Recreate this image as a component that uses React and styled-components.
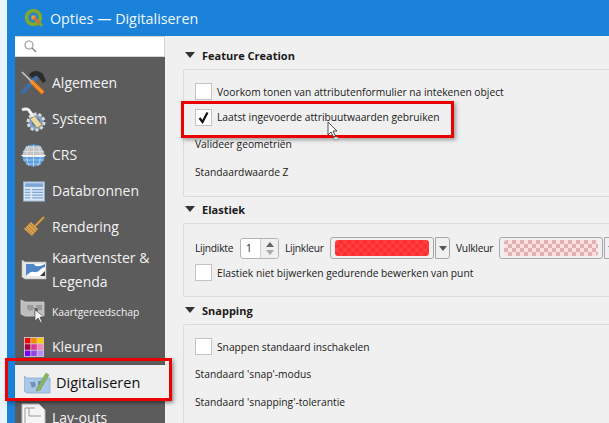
import React from 'react'
import styled, { createGlobalStyle } from 'styled-components'

const GlobalStyle = createGlobalStyle`
html, body {
  margin: 0;
  padding: 0;
  overflow: hidden;
  background: #eaf4fb;
}
`;

const Page = styled.div`
position: relative;
width: 609px;
height: 423px;
overflow: hidden;
padding-left: 7px;
box-sizing: border-box;
font-family: "Open Sans", "Noto Sans", sans-serif;
`;

const Window = styled.div`
display: flex;
flex-direction: column;
height: 100%;
background: #1a82d8;
padding-left: 8px;
`;

const TitleBar = styled.div`
display: flex;
align-items: center;
gap: 6px;
height: 36px;
flex: none;
padding-left: 9px;
color: #eef7ff;
font-size: 14.3px;
`;

const Body = styled.div`
display: flex;
flex: 1;
min-height: 0;
background: #f0f0f0;
`;

const Sidebar = styled.div`
display: flex;
flex-direction: column;
width: 150px;
flex: none;
background: #5c5c5c;
`;

const SearchBox = styled.div`
display: flex;
align-items: center;
flex: none;
height: 21px;
padding-left: 9px;
margin-bottom: 8px;
background: #fff;
border: 1px solid #d5d5d5;
border-width: 1px 1px 1px 0;
box-sizing: border-box;
`;

const NavItem = styled.div`
position: relative;
display: flex;
align-items: center;
flex: none;
height: ${({ $h }) => $h}px;
color: ${({ $active }) => ($active ? '#111' : '#f2f2f2')};
font-size: ${({ $small, $active }) => ($small ? 10.3 : $active ? 14.5 : 14)}px;
line-height: 24px;
background: ${({ $active }) => ($active ? '#efefef' : 'transparent')};
margin-right: ${({ $active }) => ($active ? '-5px' : '0')};
box-shadow: ${({ $active }) => ($active ? '1px 1px 3px rgba(0,0,0,0.3)' : 'none')};
`;

const NavIcon = styled.div`
display: flex;
align-items: center;
justify-content: center;
width: 37px;
flex: none;
padding-left: ${({ $active }) => ($active ? '4px' : '0')};
`;

const NavLabel = styled.div`
width: ${({ $wrap }) => ($wrap ? '105px' : 'auto')};
white-space: ${({ $wrap }) => ($wrap ? 'normal' : 'nowrap')};
`;

const Content = styled.div`
flex: 1;
min-width: 0;
padding: 12px 0 0 18px;
display: flex;
flex-direction: column;
overflow: hidden;
`;

const SectionHead = styled.div`
display: flex;
align-items: center;
flex: none;
gap: 7px;
height: 16px;
box-sizing: border-box;
padding: 0 0 2px 2px;
margin-bottom: 5px;
font-size: 11px;
font-weight: 700;
color: #1a1a1a;
`;

const Triangle = styled.div`
width: 0;
height: 0;
border-left: 5px solid transparent;
border-right: 5px solid transparent;
border-top: 6px solid #333;
`;

const Group = styled.div`
display: flex;
flex-direction: column;
height: ${({ $h }) => $h}px;
flex: none;
margin-bottom: ${({ $mb }) => $mb}px;
margin-right: -20px;
padding: ${({ $pt }) => $pt}px 0 0 11px;
box-sizing: border-box;
border: 1px solid #dcdcdc;
border-radius: 2px;
`;

const Row = styled.div`
display: flex;
align-items: center;
gap: 5px;
height: ${({ $h }) => $h}px;
flex: none;
font-size: 10.25px;
color: #1a1a1a;
white-space: nowrap;
`;

const FieldLabel = styled.span`
width: ${({ $w }) => $w}px;
flex: none;
letter-spacing: -0.25px;
`;

const Check = styled.div`
display: flex;
align-items: center;
justify-content: center;
width: 17px;
height: 17px;
flex: none;
background: #fff;
border: 1px solid #c4c4c4;
box-sizing: border-box;
`;

const Spin = styled.div`
display: flex;
align-items: center;
justify-content: space-between;
width: 39px;
height: 21px;
flex: none;
margin: 0 1px 0 2px;
padding-left: 5px;
box-sizing: border-box;
background: #fff;
border: 1px solid #b4b4b4;
border-radius: 3px;
overflow: hidden;
`;

const SpinArrows = styled.div`
display: flex;
flex-direction: column;
align-items: center;
justify-content: center;
gap: 3px;
width: 17px;
height: 100%;
background: #f0f0f0;
border-left: 1px solid #cfcfcf;
`;

const Arrow = styled.div`
width: 0;
height: 0;
border-left: 4px solid transparent;
border-right: 4px solid transparent;
border-bottom: ${({ $down, $c }) => ($down ? 'none' : `5px solid ${$c}`)};
border-top: ${({ $down, $c }) => ($down ? `5px solid ${$c}` : 'none')};
`;

const ColorButton = styled.div`
width: 104px;
height: 22px;
flex: none;
margin-left: 2px;
padding: 2px 4px;
box-sizing: border-box;
background: #f0f0f0;
border: 1px solid #a8a8a8;
border-radius: 3px;
`;

const Swatch = styled.div`
height: 100%;
border-radius: 3px;
background: repeating-conic-gradient(${({ $a }) => $a} 0 25%, ${({ $b }) => $b} 0 50%) 0 0 / 8px 8px;
`;

const DropButton = styled.div`
display: flex;
align-items: center;
justify-content: center;
width: 15px;
height: 22px;
flex: none;
margin: 0 1px 0 -4px;
box-sizing: border-box;
background: #f0f0f0;
border: 1px solid #a8a8a8;
border-radius: 0 3px 3px 0;
`;

const Highlight = styled.div`
position: absolute;
left: ${({ $x }) => $x}px;
top: ${({ $y }) => $y}px;
width: ${({ $w }) => $w}px;
height: ${({ $h }) => $h}px;
box-sizing: border-box;
border: 3px solid #ea0000;
box-shadow: 2px 2px 4px rgba(0,0,0,0.35);
pointer-events: none;
`;

const CursorMark = styled.svg`
position: absolute;
left: 327px;
top: 121px;
`;

const Logo = () => (
  <svg width="20" height="20" viewBox="0 0 19 19">
    <circle cx="9" cy="9" r="6.5" fill="none" stroke="#7fa82e" strokeWidth="3.6" />
    <path d="M10 10l7 7" stroke="#7fa82e" strokeWidth="3" />
    <path d="M7 7h4v4H7z" fill="#f09a2a" />
    <path d="M9.5 9.5l5 5" stroke="#e2604a" strokeWidth="2" />
  </svg>
);

const SearchIcon = () => (
  <svg width="13" height="13" viewBox="0 0 13 13">
    <circle cx="5" cy="5" r="4" fill="none" stroke="#9a9a9a" strokeWidth="1.2" />
    <path d="M8 8l4 4" stroke="#8a8a8a" strokeWidth="1.6" />
  </svg>
);

const ToolsIcon = () => (
  <svg width="27" height="27" viewBox="0 0 27 27">
    <path d="M9 5c3-5 10-5 14-1l3 7-3 2-4-5c-2-2-5-1-7 0z" fill="#2b2b2b" />
    <path d="M16 8L3 22" stroke="#3d6ea8" strokeWidth="4.4" strokeLinecap="round" />
    <path d="M2 2l10 10" stroke="#c8c8c8" strokeWidth="1.6" />
    <path d="M11 11l12 12" stroke="#f07d12" strokeWidth="4" />
    <path d="M11 11l12 12" stroke="#ffb060" strokeWidth="1" />
  </svg>
);

const SystemIcon = () => (
  <svg width="27" height="27" viewBox="0 0 27 27">
    <circle cx="16" cy="16" r="8" fill="#7f9fc6" stroke="#d8d8d8" strokeWidth="3" strokeDasharray="3 2" />
    <circle cx="16" cy="16" r="4" fill="#4d76ab" />
    <path d="M2 4c4-2 7-1 8 2l10 13" stroke="#f2f2f2" strokeWidth="3" fill="none" />
    <path d="M10 13l7 9 5-3-7-9z" fill="#e9d9a0" stroke="#7a6a3a" strokeWidth="0.6" />
  </svg>
);

const GlobeIcon = () => (
  <svg width="27" height="27" viewBox="0 0 27 27">
    <circle cx="13.5" cy="13.5" r="11" fill="#5aa0de" />
    <path d="M6 4.500h15l4 9H2z" fill="#c4c4c4" />
    <path d="M0.500 13h26l-3 2H3.500z" fill="#f2f2f2" />
    <path d="M3 9.500h21M6 5h15M3 18h21M6 22h15M13.500 3v22M9 3c-3 7-3 15 0 21M18 3c3 7 3 15 0 21" stroke="#e6eef5" strokeWidth="0.7" fill="none" opacity="0.8" />
  </svg>
);

const TableIcon = () => (
  <svg width="22" height="21" viewBox="0 0 24 22">
    <rect x="0.5" y="0.5" width="23" height="21" fill="#d9e6f5" stroke="#8fa9c8" />
    <rect x="2" y="2" width="20" height="4" fill="#7ea6d6" />
    <path d="M2 9h6M10 9h12M2 12h6M10 12h12M2 15h6M10 15h12M2 18h6M10 18h12" stroke="#7ea6d6" strokeWidth="1.4" />
  </svg>
);

const BrushIcon = () => (
  <svg width="24" height="24" viewBox="0 0 24 24">
    <path d="M13 11l9-9" stroke="#d99a3a" strokeWidth="2.2" />
    <path d="M9 7l7 7-6 7-8-7z" fill="#d9a050" />
    <path d="M6 11l7 7M4 13l7 7M8 9l7 7" stroke="#a8742c" strokeWidth="0.8" />
  </svg>
);

const MapIcon = () => (
  <svg width="26" height="20" viewBox="0 0 26 20">
    <path d="M1 0l3 2h21v17H4l-3-2z" fill="#e6e6e6" stroke="#bdbdbd" strokeWidth="0.6" />
    <rect x="5" y="4" width="19" height="12" fill="#fff" />
    <path d="M5 4h8c1 3 5 3 11 0v3c-5 1-6 6-11 5-3-1-5 1-8 4z" fill="#4f86c6" />
    <path d="M19 16l5-5v5z" fill="#3a3a3a" />
  </svg>
);

const ToolMapIcon = () => (
  <svg width="28" height="26" viewBox="0 0 28 26">
    <path d="M1 1l4 2h19v14H5l-4-2z" fill="#bdbdbd" stroke="#d2d2d2" strokeWidth="0.8" />
    <path d="M7 6h6l1 4-4 2-3-2zM16 6h6v5h-5zM14 12l3 1v3h-3z" fill="#9a9a9a" />
    <path d="M14 9h3l1 3-2 1z" fill="#5c5c5c" />
    <path d="M15 11v11l3-3 3 5 1-1-2-5h4z" fill="#f5f5f5" stroke="#333" strokeWidth="0.5" />
  </svg>
);

const ColorsIcon = () => {
  const colors = ['#ff0000', '#f58a00', '#ffc800', '#a80038', '#e0349c', '#ff7fb8', '#7a00ff', '#9444e8', '#b88cff'];
  return (
    <svg width="20" height="20" viewBox="0 0 22 22">
      <rect width="22" height="22" fill="#c8c8c8" />
      {colors.map((c, i) => (
        <rect key={c} x={1 + (i % 3) * 7} y={1 + Math.floor(i / 3) * 7} width="6" height="6" fill={c} />
      ))}
    </svg>
  );
};

const DigitizeIcon = () => (
  <svg width="27" height="24" viewBox="0 0 27 24">
    <path d="M0 5l3 2h23v15H3l-3-2z" fill="#a9c7e6" stroke="#7fa6cf" strokeWidth="0.7" />
    <path d="M6 11h5l1 4-4 2zM14 10h5l-2 4h-3zM13 16h4v3h-3z" fill="#6f93ba" />
    <path d="M13 17l9-15 3 2-9 15-4 1z" fill="#8db563" stroke="#6c9146" strokeWidth="0.5" />
  </svg>
);

const DocIcon = () => (
  <svg width="25" height="30" viewBox="0 0 25 30">
    <path d="M1 1h17l6 6v23H1z" fill="#f5f5f5" stroke="#bbb" />
    <path d="M4 5h10M4 5v24M8 5v8h12" stroke="#999" strokeWidth="1" fill="none" />
  </svg>
);

const navItems = [
  { label: 'Algemeen', h: 36, Icon: ToolsIcon },
  { label: 'Systeem', h: 36, Icon: SystemIcon },
  { label: 'CRS', h: 36, Icon: GlobeIcon },
  { label: 'Databronnen', h: 36, Icon: TableIcon },
  { label: 'Rendering', h: 36, Icon: BrushIcon },
  { label: 'Kaartvenster & Legenda', h: 50, Icon: MapIcon, wrap: true },
  { label: 'Kaartgereedschap', h: 34, Icon: ToolMapIcon, small: true },
  { label: 'Kleuren', h: 36, Icon: ColorsIcon },
  { label: 'Digitaliseren', h: 35, Icon: DigitizeIcon, active: true },
  { label: 'Lay-outs', h: 36, Icon: DocIcon },
];

const CheckRow = ({ checked, h = 25.5, children }) => (
  <Row $h={h}>
    <Check>
      {checked && (
        <svg width="13" height="13" viewBox="0 0 13 13">
          <path d="M2.5 7l3 4 5-9.5" fill="none" stroke="#111" strokeWidth="2.2" />
        </svg>
      )}
    </Check>
    {children}
  </Row>
);

const Section = ({ title, h, pt, mb = 5, children }) => (
  <>
    <SectionHead>
      <Triangle />
      {title}
    </SectionHead>
    <Group $h={h} $pt={pt} $mb={mb}>
      {children}
    </Group>
  </>
);

export default function App() {
  return (
    <>
      <GlobalStyle />
      <Page>
        <Window>
          <TitleBar>
            <Logo />
            Opties — Digitaliseren
          </TitleBar>
          <Body>
            <Sidebar>
              <SearchBox>
                <SearchIcon />
              </SearchBox>
              {navItems.map(({ label, h, Icon, wrap, small, active }) => (
                <NavItem key={label} $h={h} $small={small} $active={active}>
                  <NavIcon $active={active}>
                    <Icon />
                  </NavIcon>
                  <NavLabel $wrap={wrap}>{label}</NavLabel>
                </NavItem>
              ))}
            </Sidebar>
            <Content>
              <Section title="Feature Creation" h={128} pt={9}>
                <CheckRow>Voorkom tonen van attributenformulier na intekenen object</CheckRow>
                <CheckRow checked>Laatst ingevoerde attribuutwaarden gebruiken</CheckRow>
                <Row $h={28}>Valideer geometriën</Row>
                <Row $h={28}>Standaardwaarde Z</Row>
              </Section>
              <Section title="Elastiek" h={74} pt={12} mb={6}>
                <Row $h={24}>
                  <FieldLabel $w={38}>Lijndikte</FieldLabel>
                  <Spin>
                    1
                    <SpinArrows>
                      <Arrow $c="#666" />
                      <Arrow $down $c="#aaa" />
                    </SpinArrows>
                  </Spin>
                  <FieldLabel $w={38}>Lijnkleur</FieldLabel>
                  <ColorButton>
                    <Swatch $a="#ff2e2e" $b="#ff3f3f" />
                  </ColorButton>
                  <DropButton><Arrow $down $c="#555" /></DropButton>
                  <FieldLabel $w={36}>Vulkleur</FieldLabel>
                  <ColorButton>
                    <Swatch $a="#ffdfdf" $b="#dfb3b3" />
                  </ColorButton>
                  <DropButton><Arrow $down $c="#555" /></DropButton>
                </Row>
                <CheckRow>Elastiek niet bijwerken gedurende bewerken van punt</CheckRow>
              </Section>
              <Section title="Snapping" h={110} pt={9}>
                <CheckRow>Snappen standaard inschakelen</CheckRow>
                <Row $h={28}>Standaard 'snap'-modus</Row>
                <Row $h={28}>Standaard 'snapping'-tolerantie</Row>
              </Section>
            </Content>
          </Body>
        </Window>
        <Highlight $x={181} $y={101} $w={273} $h={37} />
        <Highlight $x={5} $y={358} $w={167} $h={43} />
        <CursorMark width="12" height="20" viewBox="0 0 12 20">
          <path d="M1 1v13l3-3 2.500 5 2-1-2.500-5h4z" fill="#fff" stroke="#222" strokeWidth="0.8" />
          <path d="M7 16h4v3H7z" fill="#ddd" stroke="#777" strokeWidth="0.5" />
        </CursorMark>
      </Page>
    </>
  );
}
